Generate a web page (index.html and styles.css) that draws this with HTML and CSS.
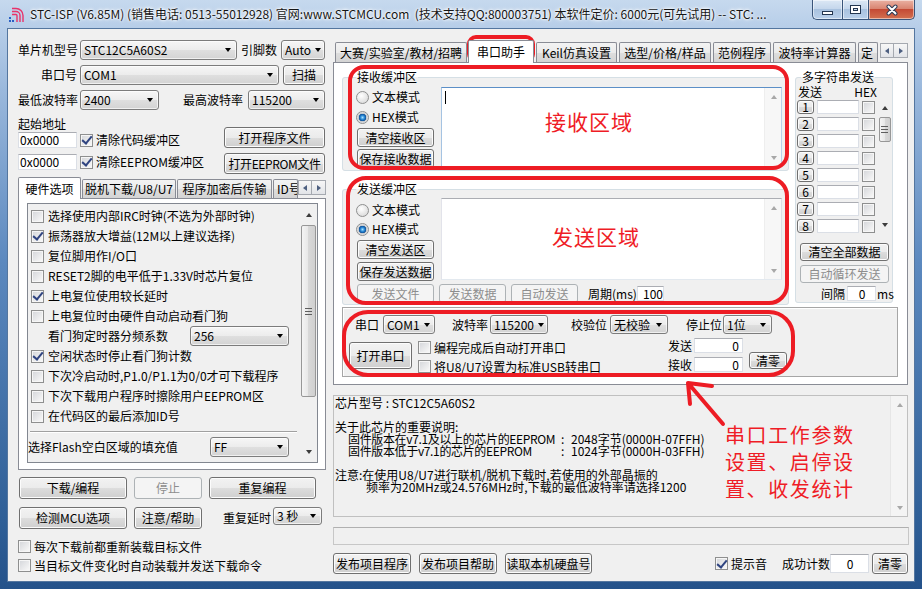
FILE: index.html
```html
<!DOCTYPE html>
<html lang="zh-CN">
<head>
<meta charset="utf-8">
<title>STC-ISP</title>
<link rel="stylesheet" href="styles.css">
</head>
<body>
<div class="win">
  <div class="titlebar">
    <svg class="appicon" width="16" height="16" viewBox="0 0 16 16">
      <g fill="none" stroke="#e8336a" stroke-width="1.4">
        <path d="M4 1.5H8A7 7 0 0 1 15 8.5V15"/>
        <path d="M4 4.5H8A4 4 0 0 1 12 8.5V15"/>
        <path d="M4 7.5H8A1 1 0 0 1 9 8.5V15"/>
      </g>
      <rect x="1" y="10" width="2" height="2" fill="#2a5fc4"/>
      <rect x="1" y="13" width="2" height="2" fill="#2a5fc4"/>
      <rect x="4" y="13" width="2" height="2" fill="#2a5fc4"/>
    </svg>
    <div class="title">STC-ISP (V6.85M) (销售电话: 0513-55012928) 官网:www.STCMCU.com&nbsp; (技术支持QQ:800003751) 本软件定价: 6000元(可先试用) -- STC: ...</div>
    <div class="capbtns">
      <div class="cap cmin"><span class="gmin"></span></div>
      <div class="cap cmax"><span class="gmax"></span></div>
      <div class="cap cclose"><svg width="14" height="12" viewBox="0 0 14 12"><path d="M3.5 2.5L10.5 9.5M10.5 2.5L3.5 9.5" stroke="#2b3a55" stroke-width="4" stroke-linecap="round"/><path d="M3.5 2.5L10.5 9.5M10.5 2.5L3.5 9.5" stroke="#fff" stroke-width="2" stroke-linecap="round"/></svg></div>
    </div>
  </div>

  <div class="mid">
    <div class="client">
      <!-- LEFT PANEL -->
      <div class="lp">
        <div class="row r20">
          <span class="lbl w62">单片机型号</span>
          <span class="cmb h20 w157">STC12C5A60S2</span>
          <span class="lbl ml4 w40">引脚数</span>
          <span class="cmb h20 w44">Auto</span>
        </div>
        <div class="row r20 mt5">
          <span class="lbl w62 rt">串口号</span>
          <span class="cmb h20 w199">COM1</span>
          <span class="btn ml4 w42 h20">扫描</span>
        </div>
        <div class="row r20 mt5">
          <span class="lbl w62">最低波特率</span>
          <span class="cmb h20 w79">2400</span>
          <span class="lbl ml24 w65">最高波特率</span>
          <span class="cmb h20 w77">115200</span>
        </div>
        <div class="addr">
          <div class="acol">
            <div class="alb">起始地址</div>
            <div class="arow"><span class="edit aed">0x0000</span><span class="chk on ml3"></span><span class="ml3">清除代码缓冲区</span></div>
            <div class="arow mt6"><span class="edit aed">0x0000</span><span class="chk on ml3"></span><span class="ml3">清除EEPROM缓冲区</span></div>
          </div>
          <div class="bcol">
            <span class="btn abtn">打开程序文件</span>
            <span class="btn abtn mt5 tight">打开EEPROM文件</span>
          </div>
        </div>

        <div class="tabstrip ltabs">
          <span class="tab act lt1">硬件选项</span>
          <span class="tab lt2">脱机下载/U8/U7</span>
          <span class="tab lt3">程序加密后传输</span>
          <span class="tab lt4">ID号</span>
          <span class="tarr"><span class="tarb"><span class="tri-l"></span></span><span class="tarb"><span class="tri-r"></span></span></span>
        </div>
        <div class="tpanel lpanel">
          <div class="listbox">
            <div class="items">
              <div class="it"><span class="chk"></span><span class="itx">选择使用内部IRC时钟(不选为外部时钟)</span></div>
              <div class="it"><span class="chk on"></span><span class="itx">振荡器放大增益(12M以上建议选择)</span></div>
              <div class="it"><span class="chk"></span><span class="itx">复位脚用作I/O口</span></div>
              <div class="it"><span class="chk"></span><span class="itx">RESET2脚的电平低于1.33V时芯片复位</span></div>
              <div class="it"><span class="chk on"></span><span class="itx">上电复位使用较长延时</span></div>
              <div class="it"><span class="chk"></span><span class="itx">上电复位时由硬件自动启动看门狗</span></div>
              <div class="it"><span class="ind">看门狗定时器分频系数</span><span class="cmb wd">256</span></div>
              <div class="it"><span class="chk on"></span><span class="itx">空闲状态时停止看门狗计数</span></div>
              <div class="it"><span class="chk"></span><span class="itx">下次冷启动时,P1.0/P1.1为0/0才可下载程序</span></div>
              <div class="it"><span class="chk"></span><span class="itx">下次下载用户程序时擦除用户EEPROM区</span></div>
              <div class="it"><span class="chk"></span><span class="itx">在代码区的最后添加ID号</span></div>
              <div class="sep"></div>
              <div class="it fl"><span>选择Flash空白区域的填充值</span><span class="cmb wff">FF</span></div>
            </div>
            <div class="vsb lsb">
              <span class="sbb"><span class="tri-u"></span></span>
              <span class="thumb lthumb"><span class="grip"></span></span>
              <span class="sbfill"></span>
              <span class="sbb"><span class="tri-d"></span></span>
            </div>
          </div>
        </div>

        <div class="lbtns">
          <span class="btn b1">下载/编程</span>
          <span class="btn dis b2">停止</span>
          <span class="btn b3">重复编程</span>
        </div>
        <div class="lbtns mt8">
          <span class="btn b1">检测MCU选项</span>
          <span class="btn b2">注意/帮助</span>
          <span class="lbl dlbl">重复延时</span>
          <span class="cmb dcmb">3 秒</span>
        </div>
        <div class="lchk mt8"><span class="chk"></span><span class="ml3">每次下载前都重新装载目标文件</span></div>
        <div class="lchk"><span class="chk"></span><span class="ml3">当目标文件变化时自动装载并发送下载命令</span></div>
      </div>

      <!-- RIGHT PANEL -->
      <div class="rp">
        <div class="tabstrip rtabs">
          <span class="tab rt1">大赛/实验室/教材/招聘</span>
          <span class="tab act rt2">串口助手</span>
          <span class="tab rt3">Keil仿真设置</span>
          <span class="tab rt4">选型/价格/样品</span>
          <span class="tab rt5">范例程序</span>
          <span class="tab rt6">波特率计算器</span>
          <span class="tab rt7">定</span>
          <span class="tarr"><span class="tarb"><span class="tri-l"></span></span><span class="tarb"><span class="tri-r"></span></span></span>
        </div>
        <div class="tpanel rpanel">
          <div class="rtop">
            <div class="lcol">
              <fieldset class="grp rcv">
                <legend>接收缓冲区</legend>
                <div class="gin">
                  <div class="gcol">
                    <div class="rad rad1"><span class="radio"></span>文本模式</div>
                    <div class="rad rad2"><span class="radio on"></span>HEX模式</div>
                    <span class="btn gbtn gb1">清空接收区</span>
                    <span class="btn gbtn gb2">保存接收数据</span>
                  </div>
                  <div class="txa"><span class="caret"></span>
                    <div class="tsb"><span class="sbb"><span class="tri-u dim"></span></span><span class="sbb"><span class="tri-d dim"></span></span></div>
                  </div>
                </div>
              </fieldset>
              <fieldset class="grp snd">
                <legend>发送缓冲区</legend>
                <div class="gin">
                  <div class="gcol">
                    <div class="rad rad1"><span class="radio"></span>文本模式</div>
                    <div class="rad rad2"><span class="radio on"></span>HEX模式</div>
                    <span class="btn gbtn gb1">清空发送区</span>
                    <span class="btn gbtn gb2">保存发送数据</span>
                  </div>
                  <div class="txa">
                    <div class="tsb"><span class="sbb"><span class="tri-u dim"></span></span><span class="sbb"><span class="tri-d dim"></span></span></div>
                  </div>
                </div>
                <div class="sbrow">
                  <span class="btn dis sb1">发送文件</span>
                  <span class="btn dis sb2">发送数据</span>
                  <span class="btn dis sb3">自动发送</span>
                  <span class="lbl per">周期(ms)</span>
                  <span class="edit ped">100</span>
                </div>
              </fieldset>
            </div>
            <fieldset class="grp multi">
              <legend>多字符串发送</legend>
              <div class="mhdr"><span>发送</span><span>HEX</span></div>
              <div class="mbody">
                <div class="mrows">
                  <div class="mrow"><span class="btn nb">1</span><span class="edit me"></span><span class="chk"></span></div>
                  <div class="mrow"><span class="btn nb">2</span><span class="edit me"></span><span class="chk"></span></div>
                  <div class="mrow"><span class="btn nb">3</span><span class="edit me"></span><span class="chk"></span></div>
                  <div class="mrow"><span class="btn nb">4</span><span class="edit me"></span><span class="chk"></span></div>
                  <div class="mrow"><span class="btn nb">5</span><span class="edit me"></span><span class="chk"></span></div>
                  <div class="mrow"><span class="btn nb">6</span><span class="edit me"></span><span class="chk"></span></div>
                  <div class="mrow"><span class="btn nb">7</span><span class="edit me"></span><span class="chk"></span></div>
                  <div class="mrow"><span class="btn nb">8</span><span class="edit me"></span><span class="chk"></span></div>
                </div>
                <div class="vsb msb">
                  <span class="sbb msbb"><span class="tri-u"></span></span>
                  <span class="thumb mthumb"><span class="grip"></span></span>
                  <span class="sbfill"></span>
                  <span class="sbb msbb"><span class="tri-d"></span></span>
                </div>
              </div>
              <span class="btn mclr">清空全部数据</span>
              <span class="btn dis mclr mclr2">自动循环发送</span>
              <div class="mint"><span class="mil">间隔</span><span class="edit mi">0</span><span class="ms">ms</span></div>
            </fieldset>
          </div>
          <div class="serial">
            <div class="srow1">
              <span class="lbl sl1">串口</span><span class="cmb sc1">COM1</span>
              <span class="lbl sl2">波特率</span><span class="cmb sc2">115200</span>
              <span class="lbl sl3">校验位</span><span class="cmb sc3">无校验</span>
              <span class="lbl sl4">停止位</span><span class="cmb sc4">1位</span>
            </div>
            <div class="srow2">
              <span class="btn sopen">打开串口</span>
              <div class="scol">
                <div class="scr"><span class="chk"></span><span class="ml3">编程完成后自动打开串口</span></div>
                <div class="scr"><span class="chk"></span><span class="ml3">将U8/U7设置为标准USB转串口</span></div>
              </div>
              <div class="stat">
                <div class="str"><span class="stl">发送</span><span class="edit sed">0</span></div>
                <div class="str"><span class="stl">接收</span><span class="edit sed">0</span></div>
              </div>
              <span class="btn sclr">清零</span>
            </div>
          </div>
        </div>

        <div class="info">
          <div class="itext">
            <div class="ln">芯片型号 : STC12C5A60S2</div>
            <div class="ln"></div>
            <div class="ln">关于此芯片的重要说明:</div>
            <div class="ln i1"><span class="k">固件版本在v7.1及以上的芯片的EEPROM</span><span class="c">:</span>2048字节(0000H-07FFH)</div>
            <div class="ln i1"><span class="k">固件版本低于v7.1的芯片的EEPROM</span><span class="c">:</span>1024字节(0000H-03FFH)</div>
            <div class="ln"></div>
            <div class="ln">注意:在使用U8/U7进行联机/脱机下载时,若使用的外部晶振的</div>
            <div class="ln i2">频率为20MHz或24.576MHz时,下载的最低波特率请选择1200</div>
          </div>
          <div class="isb"><span class="sbb"><span class="tri-u dim"></span></span><span class="sbb"><span class="tri-d dim"></span></span></div>
        </div>
        <div class="prog"></div>
        <div class="brow">
          <span class="btn bb1">发布项目程序</span>
          <span class="btn bb2">发布项目帮助</span>
          <span class="btn bb3">读取本机硬盘号</span>
          <span class="chk on bchk"></span><span class="btx">提示音</span>
          <span class="bcnt">成功计数</span>
          <span class="edit bed">0</span>
          <span class="btn bclr">清零</span>
        </div>
      </div>
    </div>
  </div>

  <svg class="marks" width="922" height="589" viewBox="0 0 922 589">
    <g fill="none" stroke="#ed1c24" stroke-width="4" stroke-linecap="round" stroke-linejoin="round">
      <rect x="469" y="37" width="64" height="24" rx="7"/>
      <rect x="350" y="67" width="437" height="101" rx="14"/>
      <rect x="348" y="178" width="439" height="125" rx="18"/>
      <rect x="344" y="312" width="449" height="63" rx="24"/>
      <path d="M723 424L688 383M688 383L690 404M688 383L712 386"/>
    </g>
  </svg>
  <div class="note n1">接收区域</div>
  <div class="note n2">发送区域</div>
  <div class="note n3">串口工作参数<br>设置、启停设<br>置、收发统计</div>
</div>
</body>
</html>
```

FILE: styles.css
```css
* { box-sizing: border-box; }
html, body { margin: 0; padding: 0; }
body {
  font-family: "Noto Sans CJK SC", "Noto Sans", sans-serif;
  font-size: 12px;
  color: #000;
  background: #2a5990;
}

/* ---------- window frame ---------- */
.win {
  position: relative;
  width: 922px;
  height: 589px;
  overflow: hidden;
  background: linear-gradient(180deg, #c6d9ee 0, #b6cde8 29px, #9ab8dc 90px, #5c89bf 260px, #2f5f97 520px, #24528a 589px);
}
.titlebar { height: 29px; display: flex; align-items: flex-start; }
.appicon { flex: none; margin: 7px 0 0 8px; }
.title {
  flex: 1;
  min-width: 0;
  margin-left: 6px;
  line-height: 28px;
  font-size: 12px;
  white-space: nowrap;
  overflow: hidden;
  color: #151515;
  text-shadow: 0 0 5px #fff, 0 0 3px #fff, 0 0 2px #fff;
}
.capbtns { flex: none; display: flex; margin: 0 7px 0 10px; }
.cap {
  height: 20px;
  display: flex;
  justify-content: center;
  align-items: center;
  border: 1px solid #3a557a;
  border-top: none;
  box-shadow: inset 0 0 0 1px rgba(255,255,255,.5);
}
.cmin { width: 30px; border-right: none; border-bottom-left-radius: 5px; background: linear-gradient(#dce8f5, #c5d7ec 45%, #a9c2df 50%, #bad0ea); }
.cmax { width: 26px; border-right: none; background: linear-gradient(#dce8f5, #c5d7ec 45%, #a9c2df 50%, #bad0ea); }
.cclose { width: 47px; border-bottom-right-radius: 5px; background: linear-gradient(#eab1a3, #d98572 45%, #c44a35 50%, #d2704f); }
.gmin { width: 11px; height: 4px; background: #fff; border: 1px solid #243650; margin-top: 6px; }
.gmax { width: 11px; height: 9px; border: 1px solid #243650; background: #c8d9ec; box-shadow: inset 0 0 0 2px #fff, inset 0 0 0 3px #243650; }

.mid { display: flex; padding: 0 8px; }
.client {
  width: 906px;
  height: 552px;
  background: #f0f0f0;
  display: flex;
  line-height: 14px;
  box-shadow: 0 0 0 1px #54769f;
}

/* ---------- common widgets ---------- */
.row { display: flex; align-items: center; flex: none; }
.r20 { height: 20px; }
.mt5 { margin-top: 5px; }
.mt6 { margin-top: 6px; }
.mt8 { margin-top: 8px; }
.ml3 { margin-left: 3px; }
.ml4 { margin-left: 4px; }
.ml24 { margin-left: 24px; }
.lbl { flex: none; white-space: nowrap; }
.w62 { width: 62px; }
.w40 { width: 40px; }
.w65 { width: 65px; }
.rt { text-align: right; padding-right: 3px; }
.tight { letter-spacing: -0.4px; }

.cmb {
  flex: none;
  display: flex;
  align-items: center;
  justify-content: space-between;
  border: 1px solid #7c7c7c;
  border-radius: 3px;
  background: linear-gradient(#f6f6f6, #ececec 50%, #dfdfdf 51%, #d3d3d3);
  box-shadow: inset 0 0 0 1px rgba(255,255,255,.65);
  padding: 0 5px 0 3px;
  white-space: nowrap;
  overflow: hidden;
}
.cmb::after {
  content: "";
  flex: none;
  margin-left: 4px;
  border-left: 3.5px solid transparent;
  border-right: 3.5px solid transparent;
  border-top: 4px solid #000;
}
.h20 { height: 20px; }
.w157 { width: 157px; }
.w44 { width: 44px; }
.w199 { width: 199px; }
.w79 { width: 79px; }
.w77 { width: 77px; }
.w42 { width: 42px; }

.btn {
  flex: none;
  display: flex;
  align-items: center;
  justify-content: center;
  border: 1px solid #707070;
  border-radius: 3px;
  background: linear-gradient(#f2f2f2, #ebebeb 50%, #dddddd 51%, #cfcfcf);
  box-shadow: inset 0 0 0 1px #fcfcfc;
  white-space: nowrap;
  line-height: 12px;
}
.btn.dis { border-color: #adb2b5; background: #f4f4f4; color: #8d8d8d; box-shadow: none; }

.edit {
  flex: none;
  display: flex;
  align-items: center;
  background: #fff;
  border: 1px solid #dbdfe6;
  border-top-color: #abadb3;
  padding-left: 1px;
  white-space: nowrap;
}

.chk {
  flex: none;
  width: 13px;
  height: 13px;
  border: 1px solid #8e8f8f;
  background: linear-gradient(135deg, #d3d5d9, #f5f5f5 85%);
  box-shadow: inset 0 0 0 1px #f6f6f6;
  display: flex;
  align-items: center;
  justify-content: center;
}
.chk.on::after {
  content: "";
  width: 4px;
  height: 8px;
  border: solid #2f4480;
  border-width: 0 2px 2px 0;
  transform: translateY(-1px) rotate(40deg);
}
.radio {
  flex: none;
  width: 13px;
  height: 13px;
  border-radius: 50%;
  border: 1px solid #8e8f8f;
  background: radial-gradient(circle at 40% 35%, #ffffff, #d2d2d2);
}
.radio.on { background: radial-gradient(circle, #a6e0ff 0, #2b8ad6 2px, #0c4f98 3.5px, #c3c7cc 4px, #ededed 6px); }

.tri-u, .tri-d, .tri-l, .tri-r { width: 0; height: 0; flex: none; }
.tri-u { border-left: 3.5px solid transparent; border-right: 3.5px solid transparent; border-bottom: 4px solid #3c3c3c; }
.tri-d { border-left: 3.5px solid transparent; border-right: 3.5px solid transparent; border-top: 4px solid #3c3c3c; }
.tri-u.dim { border-bottom-color: #a8a8a8; }
.tri-d.dim { border-top-color: #a8a8a8; }
.tri-l { border-top: 3.5px solid transparent; border-bottom: 3.5px solid transparent; border-right: 4px solid #4d5f80; }
.tri-r { border-top: 3.5px solid transparent; border-bottom: 3.5px solid transparent; border-left: 4px solid #4d5f80; }

/* tabs */
.tabstrip { display: flex; align-items: flex-end; flex: none; }
.tab {
  flex: none;
  height: 19px;
  margin-left: 1px;
  border: 1px solid #898c95;
  border-bottom: none;
  border-radius: 2px 2px 0 0;
  background: linear-gradient(#f3f3f3, #ebebeb 50%, #dedede 51%, #d4d4d4);
  display: flex;
  align-items: center;
  justify-content: center;
  white-space: nowrap;
  overflow: hidden;
}
.tab.act { height: 22px; margin-bottom: -1px; background: #fff; z-index: 2; }
.tarr { align-self: flex-start; margin-top: 3px; display: flex; flex: none; }
.tarb {
  width: 14px;
  height: 15px;
  border: 1px solid #a5a9b0;
  background: linear-gradient(#f7f7f7, #e2e4e8);
  display: flex;
  align-items: center;
  justify-content: center;
}
.tarb + .tarb { border-left: none; }
.tpanel { flex: none; border: 1px solid #898c95; background: #fff; }

/* scrollbars */
.vsb { flex: none; width: 17px; display: flex; flex-direction: column; align-items: center; }
.sbb { flex: none; width: 17px; height: 17px; display: flex; align-items: center; justify-content: center; }
.sbfill { flex: 1; }
.thumb {
  flex: none;
  width: 15px;
  border: 1px solid #979797;
  border-radius: 2px;
  background: linear-gradient(90deg, #f4f4f4, #e8e8e8 45%, #d8d8d8 50%, #d0d0d0);
  display: flex;
  align-items: center;
  justify-content: center;
}
.grip { width: 7px; height: 7px; background: repeating-linear-gradient(#5e5e5e 0 1px, transparent 1px 3px); }

/* ---------- left panel ---------- */
.lp { width: 322px; flex: none; padding: 11px 4px 0 10px; display: flex; flex-direction: column; }
.addr { display: flex; margin-top: 4px; height: 60px; flex: none; }
.acol { width: 206px; flex: none; }
.alb { margin-top: 3px; height: 14px; line-height: 14px; }
.arow { display: flex; align-items: center; height: 16px; margin-top: 1px; white-space: nowrap; }
.arow.mt6 { margin-top: 6px; }
.aed { width: 59px; height: 16px; }
.bcol { width: 101px; flex: none; display: flex; flex-direction: column; padding-top: 13px; }
.abtn { width: 101px; height: 21px; }

.ltabs { height: 21px; margin-top: 3px; }
.ltabs .tab.act { margin-left: 0; }
.lt1 { width: 63px; }
.lt2 { width: 94px; }
.lt3 { width: 95px; }
.lt4 { width: 25px; justify-content: flex-start; padding-left: 3px; }

.lpanel { width: 308px; height: 272px; padding: 4px 0 0 8px; }
.listbox { width: 291px; height: 260px; border: 1px solid #828790; background: #f0f0f0; display: flex; }
.items { flex: 1; min-width: 0; padding-top: 2px; }
.it { height: 20px; display: flex; align-items: center; padding-left: 3px; white-space: nowrap; }
.itx { margin-left: 4px; }
.ind { margin-left: 17px; }
.it .cmb { margin-left: auto; margin-right: 11px; }
.wd { width: 99px; height: 20px; }
.wff { width: 79px; height: 20px; }
.sep { margin: 5px 3px 0 2px; height: 2px; border-top: 1px solid #a0a0a0; border-bottom: 1px solid #fff; }
.it.fl { margin-top: 4px; padding-left: 0; }
.lsb .sbb:first-child { margin-top: 2px; }
.lsb .sbb:last-child { margin-bottom: 2px; }
.lthumb { height: 172px; margin-top: 2px; }

.lbtns { display: flex; align-items: center; height: 22px; margin-top: 7px; flex: none; }
.lbtns.mt8 { margin-top: 8px; }
.b1 { margin-left: 1px; width: 108px; height: 22px; }
.b2 { margin-left: 7px; width: 68px; height: 22px; }
.b3 { margin-left: 7px; width: 107px; height: 22px; }
.dlbl { margin-left: 21px; width: 50px; }
.dcmb { width: 49px; height: 18px; align-self: flex-start; }
.lchk { display: flex; align-items: center; height: 19px; flex: none; white-space: nowrap; }

/* ---------- right panel ---------- */
.rp { width: 584px; flex: none; padding: 11px 0 0 3px; display: flex; flex-direction: column; }
.rtabs { height: 22px; }
.rtabs .tab { height: 20px; margin-left: 2px; }
.rtabs .tab.act { height: 23px; margin-left: 1px; }
.rtabs .tarr { margin-left: 2px; }
.rt1 { width: 132px; justify-content: flex-start; padding-left: 4px; }
.rt2 { width: 66px; }
.rt3 { width: 81px; }
.rt4 { width: 92px; }
.rt5 { width: 58px; }
.rt6 { width: 83px; }
.rt7 { width: 20px; justify-content: flex-start; padding-left: 2px; }

.rpanel { width: 575px; height: 323px; padding: 8px 0 0 8px; display: flex; flex-direction: column; }
.rtop { display: flex; align-items: flex-start; height: 234px; flex: none; }
.lcol { width: 447px; flex: none; display: flex; flex-direction: column; }
.grp {
  margin: 0;
  min-width: 0;
  flex: none;
  border: 1px solid #d5dfe5;
  border-radius: 3px;
  background: #f0f0f0;
}
.grp legend { padding: 0 1px; font-size: 12px; line-height: 12px; }
.rcv { padding: 4px 6px 2px 13px; }
.snd { margin-top: 12px; padding: 3px 6px 1px 13px; }
.gin { display: flex; align-items: flex-start; }
.gcol { width: 78px; flex: none; display: flex; flex-direction: column; }
.rad { height: 14px; display: flex; align-items: center; white-space: nowrap; }
.rad .radio { margin-right: 3px; }
.rcv .rad1 { margin-top: 3px; }
.rcv .rad2 { margin-top: 6px; }
.rcv .gb1 { margin-top: 4px; }
.rcv .gb2 { margin-top: 2px; }
.snd .rad1 { margin-top: 5px; }
.snd .rad2 { margin-top: 5px; }
.snd .gb1 { margin-top: 4px; }
.snd .gb2 { margin-top: 3px; }
.gbtn { width: 77px; height: 19px; margin-left: 1px; }
.txa {
  flex: none;
  width: 341px;
  margin-left: 7px;
  display: flex;
  background: #fff;
  border: 1px solid #abadb3;
  border-color: #abadb3 #dbdfe6 #e3e9ef #e2e3ea;
}
.rcv .txa { height: 80px; border-color: #5b8fc7 #b9d1ea #c5daed #a5c3e2; }
.snd .txa { height: 82px; }
.caret { width: 1px; height: 13px; background: #000; margin: 3px 0 0 3px; flex: none; }
.tsb { margin-left: auto; width: 17px; flex: none; display: flex; flex-direction: column; justify-content: space-between; background: #f7f7f7; border-left: 1px solid #eeeeee; }
.sbrow { display: flex; align-items: center; height: 19px; margin: 3px 0 0 1px; }
.sb1 { width: 77px; height: 19px; }
.sb2 { margin-left: 5px; width: 67px; height: 19px; }
.sb3 { margin-left: 5px; width: 67px; height: 19px; }
.per { margin-left: 10px; width: 49px; }
.ped { width: 27px; height: 15px; padding-left: 5px; }

.multi { margin-left: 6px; width: 98px; padding: 2px 0 1px 1px; }
.multi legend { margin-left: 4px; }
.mhdr { height: 14px; display: flex; align-items: center; justify-content: space-between; padding: 0 15px 0 1px; }
.mbody { display: flex; margin-top: 1px; height: 133px; }
.mrows { width: 78px; flex: none; display: flex; flex-direction: column; gap: 3px; }
.mrow { height: 14px; display: flex; align-items: center; }
.nb { width: 17px; height: 14px; }
.me { width: 42px; height: 14px; margin-left: 3px; }
.mrow .chk { margin-left: 3px; }
.msb { margin-left: 3px; width: 13px; height: 133px; }
.msbb { width: 13px; height: 16px; }
.mthumb { width: 12px; height: 25px; margin-top: 1px; }
.mclr { width: 89px; height: 18px; margin: 10px 0 0 3px; }
.mclr2 { margin-top: 4px; }
.mint { display: flex; align-items: center; height: 15px; margin-top: 3px; padding-left: 24px; white-space: nowrap; }
.mil { flex: none; }
.mi { width: 29px; height: 15px; justify-content: center; margin-left: 2px; }
.ms { flex: none; margin-left: 1px; }

.serial {
  flex: none;
  margin-top: 2px;
  width: 556px;
  height: 70px;
  border: 1px solid #a6a6a6;
  background: #f0f0f0;
  box-shadow: inset 1px 1px 0 #fff;
  padding: 7px 0 0 12px;
}
.srow1 { display: flex; align-items: center; height: 19px; }
.srow1 .cmb { height: 19px; }
.sl1 { width: 28px; }
.sc1 { width: 52px; }
.sl2 { margin-left: 17px; width: 38px; }
.sc2 { width: 58px; }
.sl3 { margin-left: 23px; width: 39px; }
.sc3 { width: 58px; }
.sl4 { margin-left: 18px; width: 37px; }
.sc4 { width: 49px; }
.srow2 { display: flex; align-items: flex-start; height: 38px; margin: 4px 0 0 -6px; }
.sopen { width: 63px; height: 27px; margin-top: 4px; }
.scol { margin-left: 6px; width: 250px; flex: none; }
.scr { height: 19px; display: flex; align-items: center; white-space: nowrap; }
.stat { width: 75px; flex: none; }
.str { height: 15px; display: flex; align-items: center; }
.str + .str { margin-top: 4px; }
.stl { width: 26px; flex: none; }
.sed { width: 49px; height: 15px; justify-content: flex-end; padding-right: 3px; }
.sclr { margin: 14px 0 0 6px; width: 38px; height: 17px; }

.info {
  flex: none;
  margin-top: 10px;
  width: 575px;
  height: 122px;
  border: 1px solid #c0c0c0;
  background: #f0f0f0;
  display: flex;
}
.itext { flex: 1; min-width: 0; padding: 1px 0 0 1px; line-height: 12px; white-space: nowrap; }
.ln { height: 12px; }
.i1 { padding-left: 13px; }
.i2 { padding-left: 31px; }
.k { display: inline-block; width: 213px; letter-spacing: -0.35px; }
.c { display: inline-block; width: 10px; }
.isb { width: 17px; flex: none; display: flex; flex-direction: column; justify-content: space-between; background: #f4f4f4; border-left: 1px solid #e6e6e6; }

.prog { flex: none; margin-top: 10px; width: 576px; height: 18px; border: 1px solid #c7c7c7; border-top-color: #b0b0b0; background: #f0f0f0; }

.brow { display: flex; align-items: center; height: 21px; margin-top: 8px; flex: none; white-space: nowrap; }
.bb1 { width: 78px; height: 21px; }
.bb2 { margin-left: 8px; width: 78px; height: 21px; }
.bb3 { margin-left: 8px; width: 87px; height: 21px; }
.bchk { margin-left: 123px; }
.btx { margin-left: 3px; }
.bcnt { margin-left: 15px; }
.bed { width: 39px; height: 19px; justify-content: center; }
.bclr { margin-left: 3px; width: 36px; height: 21px; }

/* ---------- red annotations (overlay) ---------- */
.marks { position: absolute; left: 0; top: 0; pointer-events: none; }
.note {
  position: absolute;
  color: #ef1c26;
  font-size: 21px;
  line-height: 21px;
  letter-spacing: 1px;
  white-space: nowrap;
}
.n1 { left: 545px; top: 111px; }
.n2 { left: 552px; top: 226px; }
.n3 { left: 725px; top: 421px; font-size: 20px; line-height: 27px; letter-spacing: 1.6px; }
```
